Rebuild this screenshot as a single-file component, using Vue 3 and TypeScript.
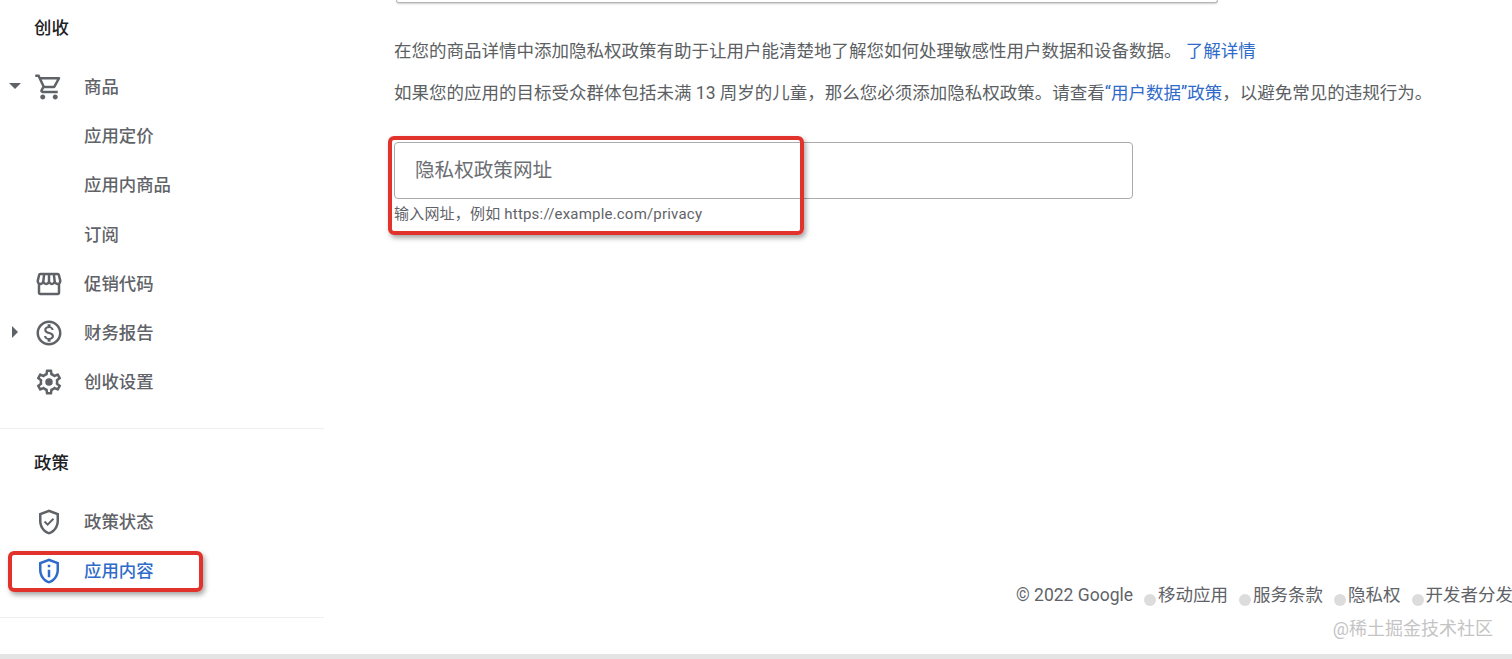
<script setup lang="ts">
interface NavItem {
  label: string
  icon?: string
  caret?: 'down' | 'right'
  active?: boolean
}

const icons: Record<string, string> = {
  cart: 'M15.55 13c.75 0 1.41-.41 1.75-1.03l3.58-6.49A.996.996 0 0 0 20.01 4H5.21l-.94-2H1v2h2l3.6 7.59-1.35 2.44C4.52 15.37 5.48 17 7 17h12v-2H7l1.1-2h7.45zM6.16 6h12.15l-2.76 5H8.53L6.16 6zM7 18c-1.1 0-1.99.9-1.99 2S5.9 22 7 22s2-.9 2-2-.9-2-2-2zm10 0c-1.1 0-1.99.9-1.99 2s.89 2 1.99 2 2-.9 2-2-.9-2-2-2z',
  store: 'M21.9 8.89l-1.05-4.37c-.22-.9-1-1.52-1.91-1.52H5.05c-.9 0-1.69.63-1.9 1.52L2.1 8.89c-.24 1.02-.02 2.06.62 2.88.08.11.19.19.28.29V19c0 1.1.9 2 2 2h14c1.1 0 2-.9 2-2v-6.94c.09-.09.2-.18.28-.28.64-.82.87-1.87.62-2.89zm-2.99-3.9l1.05 4.37c.1.42.01.84-.25 1.17-.14.18-.44.47-.94.47-.61 0-1.14-.49-1.21-1.14L16.98 5l1.93-.01zM13 5h1.96l.54 4.52c.05.39-.07.78-.33 1.07-.22.26-.54.41-.95.41-.67 0-1.22-.59-1.22-1.31V5zM8.49 9.52L9.04 5H11v4.69c0 .72-.55 1.31-1.29 1.31-.34 0-.65-.15-.89-.41-.25-.29-.37-.68-.33-1.07zm-4.45-.16L5.05 5h1.97l-.58 4.86c-.08.65-.6 1.14-1.21 1.14-.49 0-.8-.29-.93-.47-.27-.32-.36-.75-.26-1.17zM5 19v-6.03c.08.01.15.03.23.03.87 0 1.66-.36 2.24-.95.6.6 1.4.95 2.31.95.87 0 1.65-.36 2.23-.93.59.57 1.39.93 2.29.93.84 0 1.64-.35 2.24-.95.58.59 1.37.95 2.24.95.08 0 .15-.02.23-.03V19H5z',
  dollar: 'M12 2C6.48 2 2 6.48 2 12s4.48 10 10 10 10-4.48 10-10S17.52 2 12 2zm0 18c-4.41 0-8-3.59-8-8s3.59-8 8-8 8 3.59 8 8-3.59 8-8 8zm.31-8.86c-1.77-.45-2.34-.94-2.34-1.67 0-.84.79-1.43 2.1-1.43 1.38 0 1.9.66 1.94 1.64h1.71c-.05-1.34-.87-2.57-2.49-2.97V5H10.9v1.69c-1.51.32-2.72 1.3-2.72 2.81 0 1.79 1.49 2.69 3.66 3.21 1.95.46 2.34 1.15 2.34 1.87 0 .53-.39 1.39-2.1 1.39-1.6 0-2.23-.72-2.32-1.64H8.04c.1 1.7 1.36 2.66 2.86 2.97V19h2.34v-1.67c1.52-.29 2.72-1.16 2.73-2.77-.01-2.2-1.9-2.96-3.66-3.42z',
  gear: 'M19.43 12.98c.04-.32.07-.64.07-.98 0-.34-.03-.66-.07-.98l2.11-1.65c.19-.15.24-.42.12-.64l-2-3.46c-.09-.16-.26-.25-.44-.25-.06 0-.12.01-.17.03l-2.49 1c-.52-.4-1.08-.73-1.69-.98l-.38-2.65C14.46 2.18 14.25 2 14 2h-4c-.25 0-.46.18-.49.42l-.38 2.65c-.61.25-1.17.59-1.69.98l-2.49-1c-.06-.02-.12-.03-.18-.03-.17 0-.34.09-.43.25l-2 3.46c-.13.22-.07.49.12.64l2.11 1.65c-.04.32-.07.65-.07.98 0 .33.03.66.07.98l-2.11 1.65c-.19.15-.24.42-.12.64l2 3.46c.09.16.26.25.44.25.06 0 .12-.01.17-.03l2.49-1c.52.4 1.08.73 1.69.98l.38 2.65c.03.24.24.42.49.42h4c.25 0 .46-.18.49-.42l.38-2.65c.61-.25 1.17-.59 1.69-.98l2.49 1c.06.02.12.03.18.03.17 0 .34-.09.43-.25l2-3.46c.12-.22.07-.49-.12-.64l-2.11-1.65zm-1.98-1.71c.04.31.05.52.05.73 0 .21-.02.43-.05.73l-.14 1.13.89.7 1.08.84-.7 1.21-1.27-.51-1.04-.42-.9.68c-.43.32-.84.56-1.25.73l-1.06.43-.16 1.13-.2 1.35h-1.4l-.19-1.35-.16-1.13-1.06-.43c-.43-.18-.83-.41-1.23-.71l-.91-.7-1.06.43-1.27.51-.7-1.21 1.08-.84.89-.7-.14-1.13c-.03-.31-.05-.54-.05-.74s.02-.43.05-.73l.14-1.13-.89-.7-1.08-.84.7-1.21 1.27.51 1.04.42.9-.68c.43-.32.84-.56 1.25-.73l1.06-.43.16-1.13.2-1.35h1.39l.19 1.35.16 1.13 1.06.43c.43.18.83.41 1.23.71l.91.7 1.06-.43 1.27-.51.7 1.21-1.07.85-.89.7.14 1.13zM12 9a3 3 0 1 0 0 6 3 3 0 0 0 0-6z',
  shieldCheck: 'M12 2 4 5v6.1c0 5 3.4 9.7 8 10.9 4.6-1.2 8-5.9 8-10.900V5l-8-3zm6 9.100c0 4-2.500 7.600-6 8.800-3.500-1.200-6-4.800-6-8.800V6.400l6-2.250 6 2.250v4.700zM9 11 7.900 12.100l3 3 5.200-5.200L15 8.800l-4.100 4.100L9 11z',
  shieldInfo: 'M12 2 4 5v6.1c0 5 3.4 9.7 8 10.900 4.600-1.200 8-5.900 8-10.900V5l-8-3zm6 9.100c0 4-2.500 7.600-6 8.800-3.500-1.200-6-4.800-6-8.800V6.400l6-2.250 6 2.250v4.700zM11 11h2v6h-2v-6zm0-4h2v2h-2V7z',
}

const revenueItems: NavItem[] = [
  { label: '商品', icon: 'cart', caret: 'down' },
  { label: '应用定价' },
  { label: '应用内商品' },
  { label: '订阅' },
  { label: '促销代码', icon: 'store' },
  { label: '财务报告', icon: 'dollar', caret: 'right' },
  { label: '创收设置', icon: 'gear' },
]

const policyItems: NavItem[] = [
  { label: '政策状态', icon: 'shieldCheck' },
  { label: '应用内容', icon: 'shieldInfo', active: true },
]

const footerLinks = ['移动应用', '服务条款', '隐私权', '开发者分发']

const sections = [
  { title: '创收', items: revenueItems },
  { title: '政策', items: policyItems },
]
</script>

<template>
  <div class="page">
    <aside class="sidebar">
      <section v-for="section in sections" :key="section.title" class="nav-section">
        <h3 class="nav-title">{{ section.title }}</h3>
        <a
          v-for="item in section.items"
          :key="item.label"
          class="nav-item"
          :class="{ active: item.active }"
        >
          <span class="caret-slot">
            <span v-if="item.caret" class="caret" :class="item.caret"></span>
          </span>
          <span class="icon-slot">
            <svg v-if="item.icon" viewBox="0 0 24 24" width="30" height="30" fill="currentColor">
              <path :d="icons[item.icon]" />
            </svg>
          </span>
          <span class="nav-label">{{ item.label }}</span>
        </a>
      </section>
    </aside>

    <main class="content">
      <div class="top-card"></div>
      <p class="para first">
        在您的商品详情中添加隐私权政策有助于让用户能清楚地了解您如何处理敏感性用户数据和设备数据。
        <a class="link">了解详情</a>
      </p>
      <p class="para">
        如果您的应用的目标受众群体包括未满 13 周岁的儿童，那么您必须添加隐私权政策。请查看<a class="link">“用户数据”政策</a>，以避免常见的违规行为。
      </p>
      <div class="field">隐私权政策网址</div>
      <div class="hint">输入网址，例如 https://example.com/privacy</div>

      <footer class="footer">
        <span>© 2022 Google</span>
        <span v-for="link in footerLinks" :key="link" class="footer-link">
          <i class="dot"></i>{{ link }}
        </span>
      </footer>
    </main>

    <!-- red annotation boxes drawn over the screenshot -->
    <div class="mark mark-field"></div>
    <div class="mark mark-nav"></div>
    <div class="watermark">@稀土掘金技术社区</div>
    <div class="bottom-strip"></div>
  </div>
</template>

<style>
html,
body {
  margin: 0;
  background: #fff;
  overflow: hidden;
}
</style>

<style scoped>
.page {
  position: relative;
  display: grid;
  grid-template-columns: 324px 1fr;
  width: 1512px;
  height: 659px;
  overflow: hidden;
  background: #fff;
  color: #5f6368;
  font-family: Roboto, "Noto Sans CJK SC", sans-serif;
}

.nav-section {
  padding-bottom: 23px;
  border-bottom: 1px solid #efefef;
}

.nav-section:first-child {
  height: 429px;
  box-sizing: border-box;
}

.nav-title {
  margin: 0;
  padding-left: 34px;
  line-height: 56px;
  font-size: 17.4px;
  font-weight: 500;
  color: #202124;
}

.nav-section:first-child .nav-title {
  height: 61px;
}

.nav-section + .nav-section .nav-title {
  height: 67px;
  line-height: 68px;
}

.nav-item {
  display: flex;
  align-items: center;
  height: 49.2px;
  color: #5f6368;
}

.nav-item.active {
  color: #2f6bc9;
}

.caret-slot {
  display: flex;
  justify-content: center;
  width: 30px;
}

.caret {
  display: block;
  width: 0;
  height: 0;
}

.caret.down {
  border-left: 6px solid transparent;
  border-right: 6px solid transparent;
  border-top: 6px solid #5f6368;
}

.caret.right {
  border-top: 6px solid transparent;
  border-bottom: 6px solid transparent;
  border-left: 6px solid #5f6368;
}

.icon-slot {
  display: flex;
  justify-content: center;
  width: 38px;
  margin-right: 16px;
  padding-top: 3px;
}

.nav-label {
  font-size: 17.4px;
  font-weight: 500;
  white-space: nowrap;
}

.content {
  position: relative;
  display: flex;
  flex-direction: column;
  min-width: 0;
  padding-left: 70px;
}

.top-card {
  box-sizing: border-box;
  width: 822px;
  height: 3px;
  margin-left: 2px;
  border: 1px solid #b5b5b5;
  border-top: 0;
  border-radius: 0 0 6px 6px;
  box-shadow: 0 1px 2px rgba(0, 0, 0, 0.2);
}

.para {
  margin: 0;
  height: 42px;
  line-height: 42px;
  font-size: 17.5px;
  white-space: nowrap;
  color: #5c5f63;
}

.para.first {
  margin-top: 27px;
}

.link {
  color: #2f6bc9;
}

.field {
  box-sizing: border-box;
  width: 739px;
  height: 57px;
  margin-top: 28px;
  padding-left: 20px;
  border: 1px solid #a9abad;
  border-radius: 4px;
  line-height: 56px;
  font-size: 19.6px;
  color: #6b6e72;
}

.hint {
  margin-top: 6px;
  font-size: 15px;
  line-height: 18px;
  letter-spacing: 0.2px;
  color: #5f6368;
  white-space: nowrap;
}

.footer {
  display: flex;
  align-items: center;
  margin-top: auto;
  margin-bottom: 52px;
  margin-left: 622px;
  font-size: 17.5px;
  line-height: 24px;
  white-space: nowrap;
  color: #5f6368;
}

.footer-link {
  display: flex;
  align-items: center;
  margin-left: 11px;
}

.dot {
  display: block;
  width: 12px;
  height: 12px;
  margin-top: 9px;
  margin-right: 2px;
  border-radius: 50%;
  background: #dcdcdc;
}

.mark {
  position: absolute;
  box-sizing: border-box;
  border: 4px solid #e1332b;
  border-radius: 6px;
  box-shadow: 2px 3px 5px rgba(0, 0, 0, 0.35);
}

.mark-field {
  left: 388px;
  top: 136px;
  width: 416px;
  height: 99px;
}

.mark-nav {
  left: 8px;
  top: 551px;
  width: 195px;
  height: 41px;
}

.watermark {
  position: absolute;
  right: 19px;
  top: 618px;
  font-size: 18px;
  line-height: 22px;
  color: #c4c4c4;
  white-space: nowrap;
}

.bottom-strip {
  position: absolute;
  left: 0;
  right: 0;
  bottom: 0;
  height: 5px;
  background: #e4e4e4;
}
</style>
